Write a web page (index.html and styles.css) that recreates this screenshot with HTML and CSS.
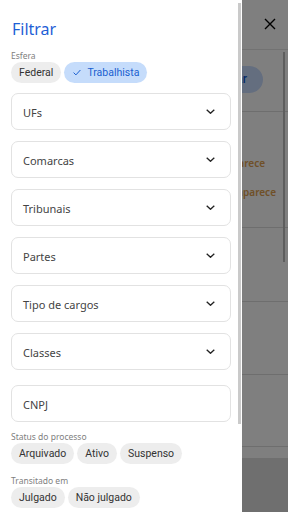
FILE: index.html
```html
<!DOCTYPE html>
<html lang="pt-BR">
  <head>
    <meta charset="UTF-8" />
    <title>Filtrar</title>
    <link rel="stylesheet" href="styles.css">
  </head>
  <body>
    <!-- page behind the drawer -->
    <div id="page">
      <div class="page-header">
        <span class="close">
          <svg width="12" height="12" viewBox="0 0 12 12"><path d="M1 1L11 11M11 1L1 11" stroke="#000" stroke-width="1.4" fill="none"/></svg>
        </span>
      </div>
      <div class="page-list">
        <div class="page-row row-action">
          <span class="pill">Filtrar</span>
        </div>
        <div class="page-row row-notes">
          <p class="note">Desaparece</p>
          <p class="note note-long">Reaparece</p>
        </div>
        <div class="page-row row-a"></div>
        <div class="page-row row-b"></div>
        <div class="page-row row-c"></div>
        <div class="page-row row-d"></div>
        <div class="list-scroll"></div>
      </div>
      <div class="page-footer"></div>
    </div>
    <div id="backdrop"></div>

    <!-- filter drawer -->
    <aside id="drawer">
      <h1>Filtrar</h1>

      <p class="group-label">Esfera</p>
      <div class="chips">
        <span class="chip">Federal</span>
        <span class="chip selected">
          <svg width="8" height="7" viewBox="0 0 8 7"><path d="M0.6 3.6L2.9 5.9L7.4 1" stroke="#1a5fd0" stroke-width="1" fill="none"/></svg>
          Trabalhista
        </span>
      </div>

      <div class="fields">
        <div class="field select">UFs<svg class="chev" width="9" height="5" viewBox="0 0 9 5"><path d="M0.7 0.7L4.5 4.3L8.3 0.7" stroke="#222" stroke-width="1.3" fill="none"/></svg></div>
        <div class="field select">Comarcas<svg class="chev" width="9" height="5" viewBox="0 0 9 5"><path d="M0.7 0.7L4.5 4.3L8.3 0.7" stroke="#222" stroke-width="1.3" fill="none"/></svg></div>
        <div class="field select">Tribunais<svg class="chev" width="9" height="5" viewBox="0 0 9 5"><path d="M0.7 0.7L4.5 4.3L8.3 0.7" stroke="#222" stroke-width="1.3" fill="none"/></svg></div>
        <div class="field select">Partes<svg class="chev" width="9" height="5" viewBox="0 0 9 5"><path d="M0.7 0.7L4.5 4.3L8.3 0.7" stroke="#222" stroke-width="1.3" fill="none"/></svg></div>
        <div class="field select">Tipo de cargos<svg class="chev" width="9" height="5" viewBox="0 0 9 5"><path d="M0.7 0.7L4.5 4.3L8.3 0.7" stroke="#222" stroke-width="1.3" fill="none"/></svg></div>
        <div class="field select">Classes<svg class="chev" width="9" height="5" viewBox="0 0 9 5"><path d="M0.7 0.7L4.5 4.3L8.3 0.7" stroke="#222" stroke-width="1.3" fill="none"/></svg></div>
        <div class="field input-cnpj">CNPJ</div>
      </div>

      <p class="group-label">Status do processo</p>
      <div class="chips">
        <span class="chip">Arquivado</span>
        <span class="chip">Ativo</span>
        <span class="chip">Suspenso</span>
      </div>

      <p class="group-label label-last">Transitado em</p>
      <div class="chips">
        <span class="chip">Julgado</span>
        <span class="chip">Não julgado</span>
      </div>

      <div class="scrollbar"></div>
    </aside>
  </body>
</html>
```

FILE: styles.css
```css
* {
  box-sizing: border-box;
  padding: 0;
  margin: 0;
}

body {
  font-family: "Noto Sans", sans-serif;
  width: 288px;
  height: 512px;
  overflow: hidden;
  background: #fff;
}

/* page behind */

#page {
  display: flex;
  flex-direction: column;
  height: 512px;
}

.page-header {
  height: 50px;
  display: flex;
  justify-content: flex-end;
  align-items: center;
  padding-right: 12px;
  border-bottom: 1px solid #e4e4e4;
}

.close {
  display: flex;
  width: 12px;
  height: 12px;
  margin-top: -1px;
}

.page-list {
  position: relative;
  flex-grow: 1;
}

.page-row {
  border-bottom: 1px solid #dcdcdc;
}

.row-action {
  height: 62px;
  display: flex;
  justify-content: flex-end;
  align-items: center;
  padding-right: 25px;
  padding-bottom: 3px;
}

.pill {
  background: #c8dcff;
  color: #0b57d0;
  font-family: Roboto, sans-serif;
  font-size: 12px;
  font-weight: 500;
  height: 27px;
  line-height: 27px;
  padding: 0 16px;
  border-radius: 14px;
}

.row-notes {
  height: 116px;
  padding-top: 44px;
}

.note {
  color: #e0a050;
  font-size: 10px;
  font-weight: 600;
  text-align: right;
  padding-right: 23px;
  line-height: 14px;
}

.note-long {
  margin-top: 15px;
  padding-right: 12px;
}

.row-a { height: 74px; }
.row-b { height: 73px; }
.row-c { height: 72px; }
.row-d { height: 11px; border-bottom: none; }

.list-scroll {
  position: absolute;
  right: 3px;
  top: 2px;
  width: 2px;
  height: 210px;
  background: #bcbcbc;
}

.page-footer {
  height: 54px;
  background: #dedede;
}

#backdrop {
  position: fixed;
  inset: 0;
  background: rgba(0, 0, 0, 0.5);
}

/* drawer */

#drawer {
  position: fixed;
  left: 0;
  top: 0;
  bottom: 0;
  width: 242px;
  background: #fff;
  padding: 17px 11px 0 11px;
}

h1 {
  font-size: 16px;
  font-weight: 400;
  color: #1f5fd6;
  line-height: 24px;
  padding-left: 1px;
}

.group-label {
  font-size: 8.5px;
  color: #808080;
  line-height: 12px;
  margin-top: 9px;
}

.label-last {
  margin-top: 11px;
}

.chips {
  display: flex;
  gap: 3px;
}

.chip {
  display: inline-flex;
  align-items: center;
  gap: 6px;
  height: 21px;
  padding: 0 8px;
  border-radius: 11px;
  background: #ededed;
  color: #333;
  font-family: Roboto, sans-serif;
  font-size: 10.5px;
}

.chip.selected {
  background: #c5dcfb;
  color: #1a5fd0;
  padding: 0 8px 0 9px;
}

.fields {
  display: flex;
  flex-direction: column;
  gap: 11px;
  margin-top: 10px;
  margin-bottom: 4px;
  width: 220px;
}

.field {
  height: 37px;
  border: 1px solid #e2e2e2;
  border-radius: 7px;
  display: flex;
  align-items: center;
  justify-content: space-between;
  padding: 2px 15px 0 11px;
  font-size: 11px;
  color: #444;
}

.field.input-cnpj {
  margin-top: 4px;
}

.chev {
  margin-top: -3px;
}

.scrollbar {
  position: absolute;
  right: 1px;
  top: 3px;
  width: 3px;
  height: 421px;
  background: #cacaca;
}
```
